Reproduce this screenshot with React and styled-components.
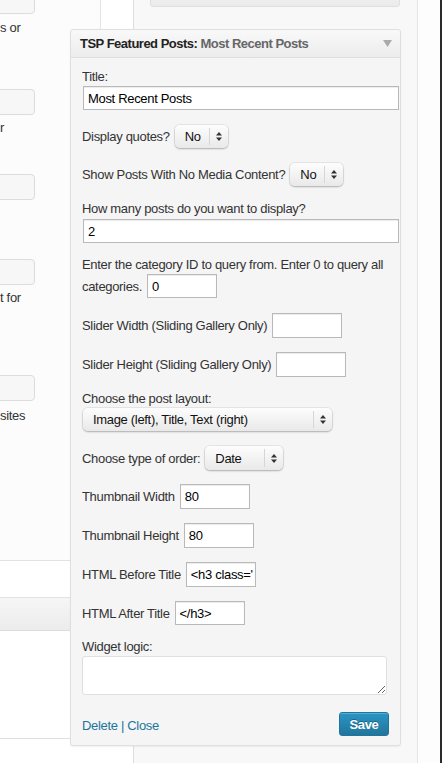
import styled, { createGlobalStyle } from "styled-components";

const Global = createGlobalStyle`
    body {
        margin : 0;
        background : #fff;
    }
`;

const Page = styled.div`
    width : 442px;
    height : 763px;
    overflow : hidden;
    display : flex;
    font-family : "Liberation Sans", Arial, sans-serif;
    font-size : 13px;
    letter-spacing : -0.32px;
    color : #333;
`;

/* left column: the cut-off admin form behind the widget */
const LeftCol = styled.div`
    width : 134px;
    flex-shrink : 0;
    box-sizing : border-box;
    border-right : 1px solid #dedede;
    background : #fff;
    display : flex;
    flex-direction : column;
`;
const LeftTop = styled.div`
    height : 561px;
    display : flex;
    border-bottom : 1px solid #e2e2e2;
    box-sizing : border-box;
`;
const LeftPanel = styled.div`
    width : 101px;
    box-sizing : border-box;
    border-right : 1px solid #e4e4e4;
    background : #fcfcfc;
`;
const GhostInput = styled.div`
    margin-top : ${(p) => p.$top}px;
    margin-left : -10px;
    width : 45px;
    height : 26px;
    box-sizing : border-box;
    border : 1px solid #dcdcdc;
    border-radius : 4px;
    background : #f7f7f7;
`;
const GhostText = styled.div`
    margin-top : ${(p) => p.$top}px;
    line-height : 18px;
    white-space : nowrap;
`;
const LeftGap = styled.div`
    height : 36px;
    border-bottom : 1px solid #e2e2e2;
`;
const LeftBar = styled.div`
    height : 33px;
    box-sizing : border-box;
    border-bottom : 1px solid #dcdcdc;
    background : linear-gradient(#f6f6f6, #ececec);
`;
const LeftBlank = styled.div`
    height : 108px;
    box-sizing : border-box;
    border-bottom : 1px solid #e0e0e0;
`;

/* widget sidebar */
const Sidebar = styled.div`
    width : 284px;
    flex-shrink : 0;
    box-sizing : border-box;
    border-right : 1px solid #e6e6e6;
    background : #f8f8f8;
    padding-left : 16px;
`;
const CollapsedWidget = styled.div`
    margin-top : -14px;
    width : 250px;
    height : 21px;
    box-sizing : border-box;
    border : 1px solid #dfdfdf;
    border-radius : 0 0 3px 3px;
    background : linear-gradient(#f3f3f3, #ebebeb);
`;
const Widget = styled.div`
    position : relative;
    z-index : 1;
    margin-top : 22px;
    margin-left : -80px;
    width : 331px;
    box-sizing : border-box;
    border : 1px solid #dfdfdf;
    border-radius : 3px;
    background : #f5f5f5;
    box-shadow : 0 1px 2px rgba(0, 0, 0, 0.06);
`;
const WidgetHead = styled.div`
    height : 27px;
    display : flex;
    align-items : center;
    justify-content : space-between;
    padding : 0 8px 0 9px;
    border-bottom : 1px solid #dfdfdf;
    border-radius : 3px 3px 0 0;
    background : linear-gradient(#f9f9f9, #ececec);
    font-weight : bold;
    letter-spacing : -0.5px;
    color : #222;
`;
const InstanceTitle = styled.span`
    color : #666;
`;
const WidgetBody = styled.div`
    padding : 10px 11px 9px 11px;
`;
const Label = styled.div`
    line-height : 18px;
    margin-top : ${(p) => p.$top || 0}px;
    white-space : nowrap;
`;
const Row = styled.div`
    display : flex;
    align-items : center;
    gap : 5px;
    margin-top : ${(p) => p.$top || 0}px;
    white-space : nowrap;
`;
const TextInput = styled.div`
    width : ${(p) => p.$w}px;
    height : ${(p) => p.$h || 25}px;
    flex-shrink : 0;
    margin-left : ${(p) => p.$ml || 0}px;
    margin-top : ${(p) => p.$mt || 0}px;
    box-sizing : border-box;
    display : flex;
    align-items : center;
    padding : 0 4px;
    border : 1px solid #b9b9b9;
    background : #fff;
    box-shadow : inset 0 1px 1px rgba(0, 0, 0, 0.08);
    color : #000;
    overflow : hidden;
    white-space : nowrap;
`;
const Select = styled.div`
    width : ${(p) => p.$w}px;
    height : ${(p) => p.$h || 23}px;
    flex-shrink : 0;
    margin-left : ${(p) => p.$ml || 0}px;
    box-sizing : border-box;
    display : flex;
    align-items : center;
    border-radius : 5px;
    background : linear-gradient(#fdfdfd, #e9e9e9);
    box-shadow : 0 0 0 1px rgba(0, 0, 0, 0.06), 0 1px 2px rgba(0, 0, 0, 0.25);
    color : #111;
`;
const SelectValue = styled.span`
    flex : 1;
    padding-left : 10px;
    overflow : hidden;
    white-space : nowrap;
`;
const SelectArrows = styled.span`
    width : 18px;
    align-self : stretch;
    margin : 3px 0;
    display : flex;
    align-items : center;
    justify-content : center;
    border-left : 1px solid #d6d6d6;
`;
const TextArea = styled.textarea`
    display : block;
    width : 305px;
    height : 39px;
    margin : 0;
    box-sizing : border-box;
    border : 1px solid #dfdfdf;
    border-radius : 3px;
    background : #fff;
    resize : vertical;
`;
const Footer = styled.div`
    margin-top : 17px;
    display : flex;
    align-items : center;
    justify-content : space-between;
`;
const Links = styled.div`
    color : #21759b;
    padding-top : 2px;
`;
const SaveButton = styled.div`
    width : 50px;
    height : 24px;
    box-sizing : border-box;
    display : flex;
    align-items : center;
    justify-content : center;
    border : 1px solid #21759b;
    border-radius : 3px;
    background : linear-gradient(#2a95c5, #21759b);
    box-shadow : inset 0 1px 0 rgba(120, 200, 230, 0.5);
    color : #fff;
    font-weight : bold;
    text-shadow : 0 -1px 0 rgba(0, 0, 0, 0.3);
`;
const RightStrip = styled.div`
    width : 22px;
    flex-shrink : 0;
    background : #fdfdfd;
`;
const Edge = styled.div`
    width : 2px;
    flex-shrink : 0;
    background : #2b2b2b;
`;

const UpDown = () => (
    <svg width="6" height="9" viewBox="0 0 6 9">
        <path d="M3 0 L6 3.4 L0 3.4 Z M3 9 L6 5.6 L0 5.6 Z" fill="#333" />
    </svg>
);

const Dropdown = ({ value, w, ml, h }) => (
    <Select $w={w} $ml={ml} $h={h}>
        <SelectValue>{value}</SelectValue>
        <SelectArrows>
            <UpDown />
        </SelectArrows>
    </Select>
);

const App = () => {
    return (
        <Page>
            <Global />
            <LeftCol>
                <LeftTop>
                    <LeftPanel>
                        <GhostInput $top={-12} />
                        <GhostText $top={5}>s or</GhostText>
                        <GhostInput $top={52} />
                        <GhostText $top={4}>r</GhostText>
                        <GhostInput $top={37} />
                        <GhostInput $top={59} />
                        <GhostText $top={4}>t for</GhostText>
                        <GhostInput $top={68} />
                        <GhostText $top={6}>sites</GhostText>
                    </LeftPanel>
                </LeftTop>
                <LeftGap />
                <LeftBar />
                <LeftBlank />
            </LeftCol>

            <Sidebar>
                <CollapsedWidget />
                <Widget>
                    <WidgetHead>
                        <span>
                            TSP Featured Posts: <InstanceTitle>Most Recent Posts</InstanceTitle>
                        </span>
                        <svg width="9" height="7" viewBox="0 0 9 7">
                            <path d="M0 0 H9 L4.5 7 Z" fill="#aaa" />
                        </svg>
                    </WidgetHead>
                    <WidgetBody>
                        <Label>Title:</Label>
                        <TextInput $w={316} $h={24} $ml={1}>Most Recent Posts</TextInput>

                        <Row $top={15}>
                            Display quotes?
                            <Dropdown value="No" w={53} />
                        </Row>
                        <Row $top={15}>
                            Show Posts With No Media Content?
                            <Dropdown value="No" w={53} />
                        </Row>

                        <Label $top={14}>How many posts do you want to display?</Label>
                        <TextInput $w={316} $h={24} $ml={1} $mt={1}>2</TextInput>

                        <Label $top={13}>Enter the category ID to query from. Enter 0 to query all</Label>
                        <Row>
                            categories.
                            <TextInput $w={70} $h={24}>0</TextInput>
                        </Row>

                        <Row $top={15}>
                            Slider Width (Sliding Gallery Only)
                            <TextInput $w={70} />
                        </Row>
                        <Row $top={14}>
                            Slider Height (Sliding Gallery Only)
                            <TextInput $w={70} />
                        </Row>

                        <Label $top={13}>Choose the post layout:</Label>
                        <Dropdown value="Image (left), Title, Text (right)" w={249} ml={1} />

                        <Row $top={15}>
                            Choose type of order:
                            <Dropdown value="Date" w={78} h={24} />
                        </Row>
                        <Row $top={14}>
                            Thumbnail Width
                            <TextInput $w={70}>80</TextInput>
                        </Row>
                        <Row $top={14}>
                            Thumbnail Height
                            <TextInput $w={70}>80</TextInput>
                        </Row>
                        <Row $top={14}>
                            HTML Before Title
                            <TextInput $w={70}>&lt;h3 class='</TextInput>
                        </Row>
                        <Row $top={14}>
                            HTML After Title
                            <TextInput $w={70} $h={24}>&lt;/h3&gt;</TextInput>
                        </Row>

                        <Label $top={13}>Widget logic:</Label>
                        <TextArea />

                        <Footer>
                            <Links>Delete | Close</Links>
                            <SaveButton>Save</SaveButton>
                        </Footer>
                    </WidgetBody>
                </Widget>
            </Sidebar>
            <RightStrip />
            <Edge />
        </Page>
    );
};

export default App;
